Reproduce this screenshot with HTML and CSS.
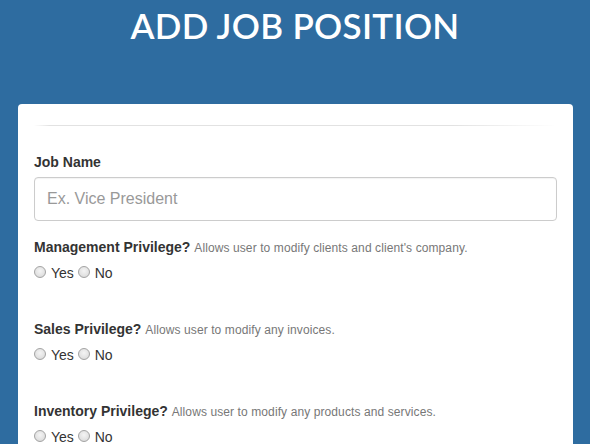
FILE: index.html
```html
<!DOCTYPE html>
<html>
<head>
<meta charset="utf-8">
<link rel="stylesheet" href="styles.css">
</head>
<body>
<h1 class="title">ADD JOB POSITION</h1>
<div class="card">
  <div class="rule"></div>
  <label class="field-label" for="job">Job Name</label>
  <input id="job" class="text-input" type="text" placeholder="Ex. Vice President">

  <div class="group">
    <div class="q"><span class="q-title">Management Privilege?</span> <span class="q-help">Allows user to modify clients and client's company.</span></div>
    <div class="opts"><label class="opt"><input type="radio" name="m" class="radio">Yes</label> <label class="opt"><input type="radio" name="m" class="radio">No</label></div>
  </div>

  <div class="group">
    <div class="q"><span class="q-title">Sales Privilege?</span> <span class="q-help">Allows user to modify any invoices.</span></div>
    <div class="opts"><label class="opt"><input type="radio" name="s" class="radio">Yes</label> <label class="opt"><input type="radio" name="s" class="radio">No</label></div>
  </div>

  <div class="group">
    <div class="q"><span class="q-title">Inventory Privilege?</span> <span class="q-help">Allows user to modify any products and services.</span></div>
    <div class="opts"><label class="opt"><input type="radio" name="i" class="radio">Yes</label> <label class="opt"><input type="radio" name="i" class="radio">No</label></div>
  </div>
</div>
</body>
</html>
```

FILE: styles.css
```css
html, body {
  margin: 0;
  padding: 0;
  background: #2e6ca0;
  font-family: "Liberation Sans", Arial, sans-serif;
  color: #333;
  overflow: hidden;
}
.title {
  margin: 0;
  padding-top: 5px;
  text-align: center;
  color: #fff;
  font-family: "Lato", "Open Sans", sans-serif;
  font-weight: 600;
  font-size: 35px;
  line-height: 40px;
  letter-spacing: 0.3px;
}
.card {
  background: #fff;
  margin: 59px 17px 0 18px;
  border-radius: 4px 4px 0 0;
  padding: 21px 16px 40px;
  height: 400px;
}
.rule {
  height: 1px;
  margin: 0 0 26px;
  background: linear-gradient(to right, rgba(224,224,224,0) 0%, #e2e2e2 3%, #e2e2e2 80%, rgba(224,224,224,0) 100%);
}
.field-label {
  display: block;
  font-weight: 700;
  font-size: 14px;
  line-height: 20px;
  margin-bottom: 5px;
}
.text-input {
  display: block;
  box-sizing: border-box;
  width: 100%;
  height: 44px;
  margin: 0 0 16px;
  padding: 0 12px;
  border: 1px solid #ccc;
  border-radius: 4px;
  font-family: "Liberation Sans", Arial, sans-serif;
  font-size: 16px;
  color: #555;
  box-shadow: inset 0 1px 1px rgba(0,0,0,0.05);
}
.text-input::placeholder {
  color: #999;
}
.group {
  margin-bottom: 36px;
}
.q {
  font-size: 14px;
  line-height: 20px;
  margin-bottom: 5px;
}
.q-title {
  font-weight: 700;
}
.q-help {
  font-size: 12px;
  color: #777;
  letter-spacing: 0.1px;
}
.opts {
  font-size: 14px;
  line-height: 20px;
  height: 20px;
}
.opt {
  display: inline-flex;
  align-items: center;
}
.radio {
  appearance: none;
  -webkit-appearance: none;
  width: 12px;
  height: 12px;
  margin: 0 5px 0 0;
  border: 1px solid #a3a3a3;
  border-radius: 50%;
  background: radial-gradient(circle at 50% 40%, #f4f4f4 0%, #e2e2e2 60%, #d0d0d0 100%);
  box-sizing: border-box;
  position: relative;
  top: -1px;
}
```
